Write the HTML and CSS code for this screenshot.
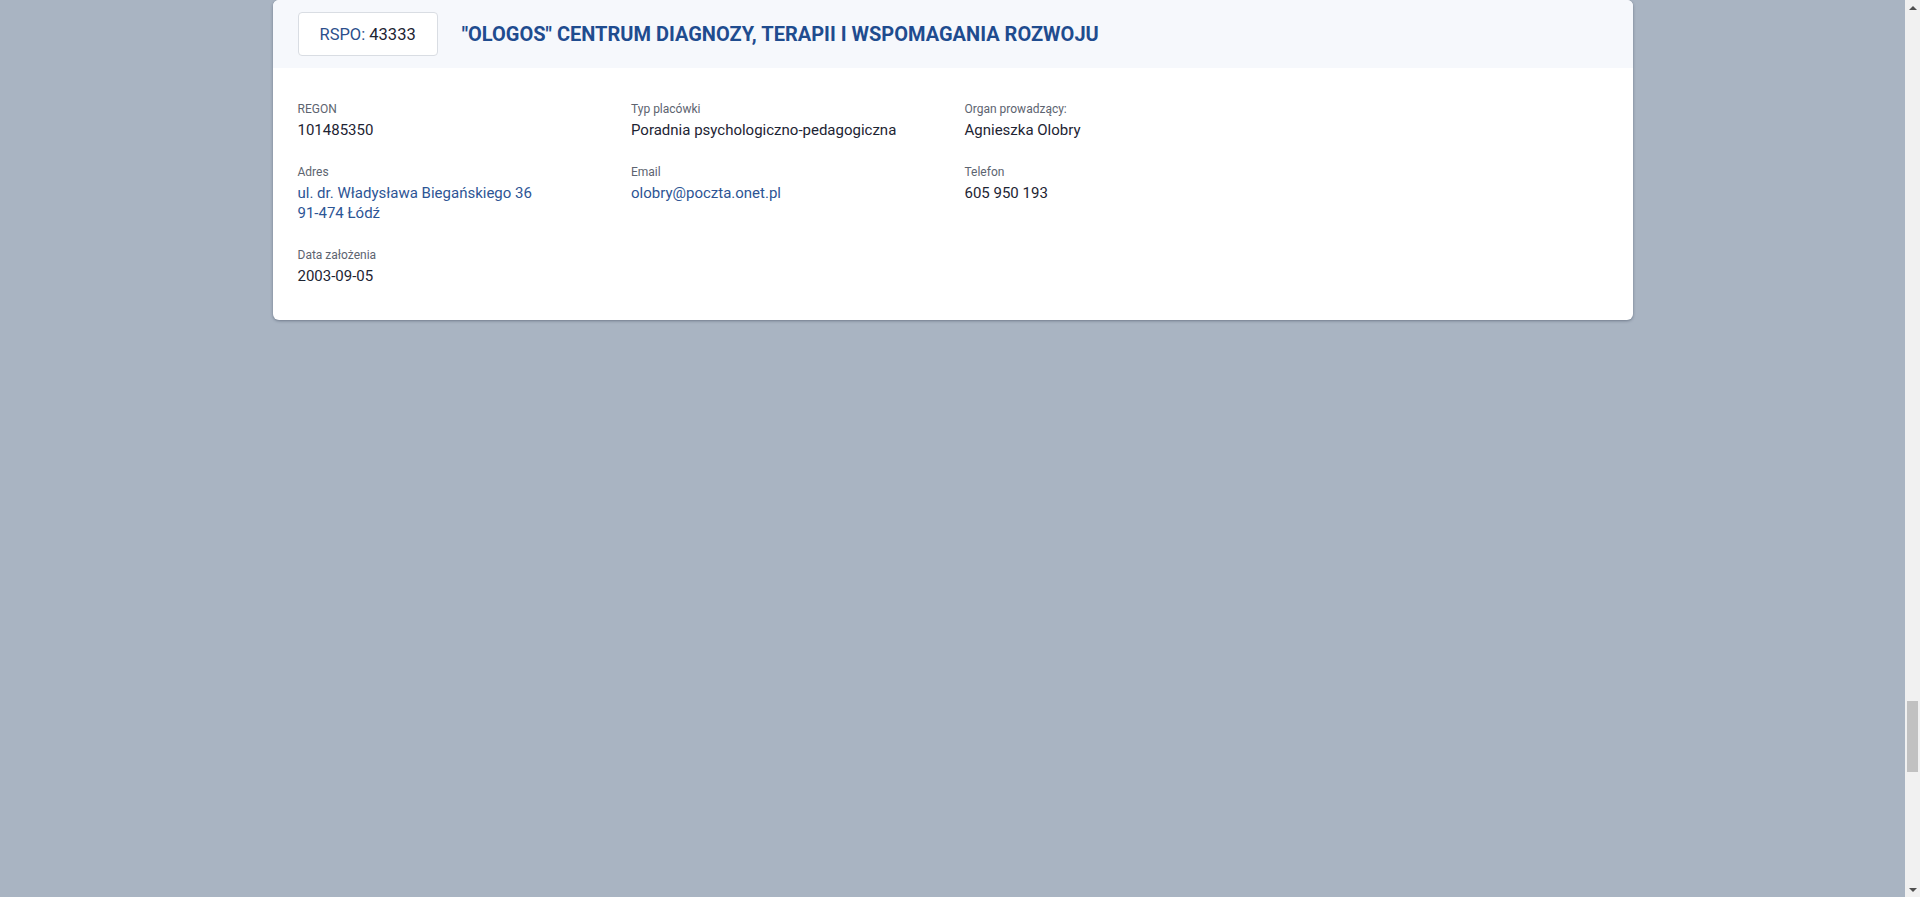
FILE: index.html
```html
<!DOCTYPE html>
<html lang="pl">
<head>
<meta charset="utf-8">
<title>Placówka</title>
<link rel="stylesheet" href="styles.css">
</head>
<body>
<main class="page">
  <article class="card">
    <header class="card-head">
      <div class="rspo"><span class="rspo-label">RSPO:</span>&nbsp;<span class="rspo-num">43333</span></div>
      <h2 class="card-title">"OLOGOS" CENTRUM DIAGNOZY, TERAPII I WSPOMAGANIA ROZWOJU</h2>
    </header>
    <div class="card-body">
      <dl class="field row-start">
        <dt class="label">REGON</dt>
        <dd class="value">101485350</dd>
      </dl>
      <dl class="field">
        <dt class="label">Typ placówki</dt>
        <dd class="value">Poradnia psychologiczno-pedagogiczna</dd>
      </dl>
      <dl class="field">
        <dt class="label">Organ prowadzący:</dt>
        <dd class="value">Agnieszka Olobry</dd>
      </dl>
      <dl class="field row-start">
        <dt class="label">Adres</dt>
        <dd class="value"><a class="link" href="#">ul. dr. Władysława Biegańskiego 36<br>91-474 Łódź</a></dd>
      </dl>
      <dl class="field">
        <dt class="label">Email</dt>
        <dd class="value"><a class="link" href="#">olobry@poczta.onet.pl</a></dd>
      </dl>
      <dl class="field">
        <dt class="label">Telefon</dt>
        <dd class="value">605 950 193</dd>
      </dl>
      <dl class="field row-start">
        <dt class="label">Data założenia</dt>
        <dd class="value">2003-09-05</dd>
      </dl>
    </div>
  </article>
</main>
<div class="scrollbar" aria-hidden="true">
  <span class="sb-arrow sb-up"></span>
  <span class="sb-track"><span class="sb-thumb"></span></span>
  <span class="sb-arrow sb-down"></span>
</div>
</body>
</html>
```
FILE: styles.css
```css
html {
  background: #a9b4c2;
}
body {
  margin: 0;
  font-family: Roboto, "Liberation Sans", Arial, sans-serif;
  background: #a9b4c2;
  min-height: 897px;
}
.page {
  padding: 0 15px 0 0;
}
.card {
  max-width: 1360px;
  margin: 0 auto;
  background: #ffffff;
  border-radius: 6px;
  box-shadow: 0 1px 3px rgba(40, 50, 70, 0.45);
  overflow: hidden;
}
.card-head {
  display: flex;
  align-items: center;
  gap: 24px;
  height: 68px;
  box-sizing: border-box;
  padding: 0 25px;
  background: #f6f8fc;
}
.rspo {
  display: flex;
  align-items: center;
  height: 44px;
  box-sizing: border-box;
  padding: 0 21px;
  background: #ffffff;
  border: 1px solid #d9dde3;
  border-radius: 4px;
  font-size: 16.5px;
  color: #1d2433;
}
.rspo-label {
  color: #2c4f8c;
}
.card-title {
  margin: 0;
  font-size: 20px;
  font-weight: 700;
  color: #1f4c8f;
}
.card-body {
  display: grid;
  grid-template-columns: repeat(4, 1fr);
  column-gap: 24px;
  row-gap: 24px;
  padding: 33px 25px 34px;
}
.field {
  margin: 0;
}
.row-start {
  grid-column: 1;
}
.label {
  font-size: 12px;
  line-height: 16px;
  color: #5d6470;
  margin: 0 0 3px;
}
.value {
  margin: 0;
  font-size: 15px;
  line-height: 20px;
  color: #1d2433;
}
.link {
  color: #2d5595;
  text-decoration: none;
}

/* browser scrollbar, drawn over the right edge */
.scrollbar {
  position: fixed;
  top: 0;
  right: 0;
  width: 15px;
  height: 100vh;
  background: #f1f1f1;
  display: flex;
  flex-direction: column;
}
.sb-arrow {
  height: 15px;
  display: flex;
  align-items: center;
  justify-content: center;
}
.sb-arrow::before {
  content: "";
  width: 0;
  height: 0;
  border-left: 4px solid transparent;
  border-right: 4px solid transparent;
}
.sb-up::before {
  border-bottom: 4px solid #505050;
}
.sb-down::before {
  border-top: 4px solid #505050;
}
.sb-track {
  flex: 1;
  display: flex;
  flex-direction: column;
  padding: 686px 2px 0;
}
.sb-thumb {
  height: 71px;
  background: #c1c1c1;
}
```
